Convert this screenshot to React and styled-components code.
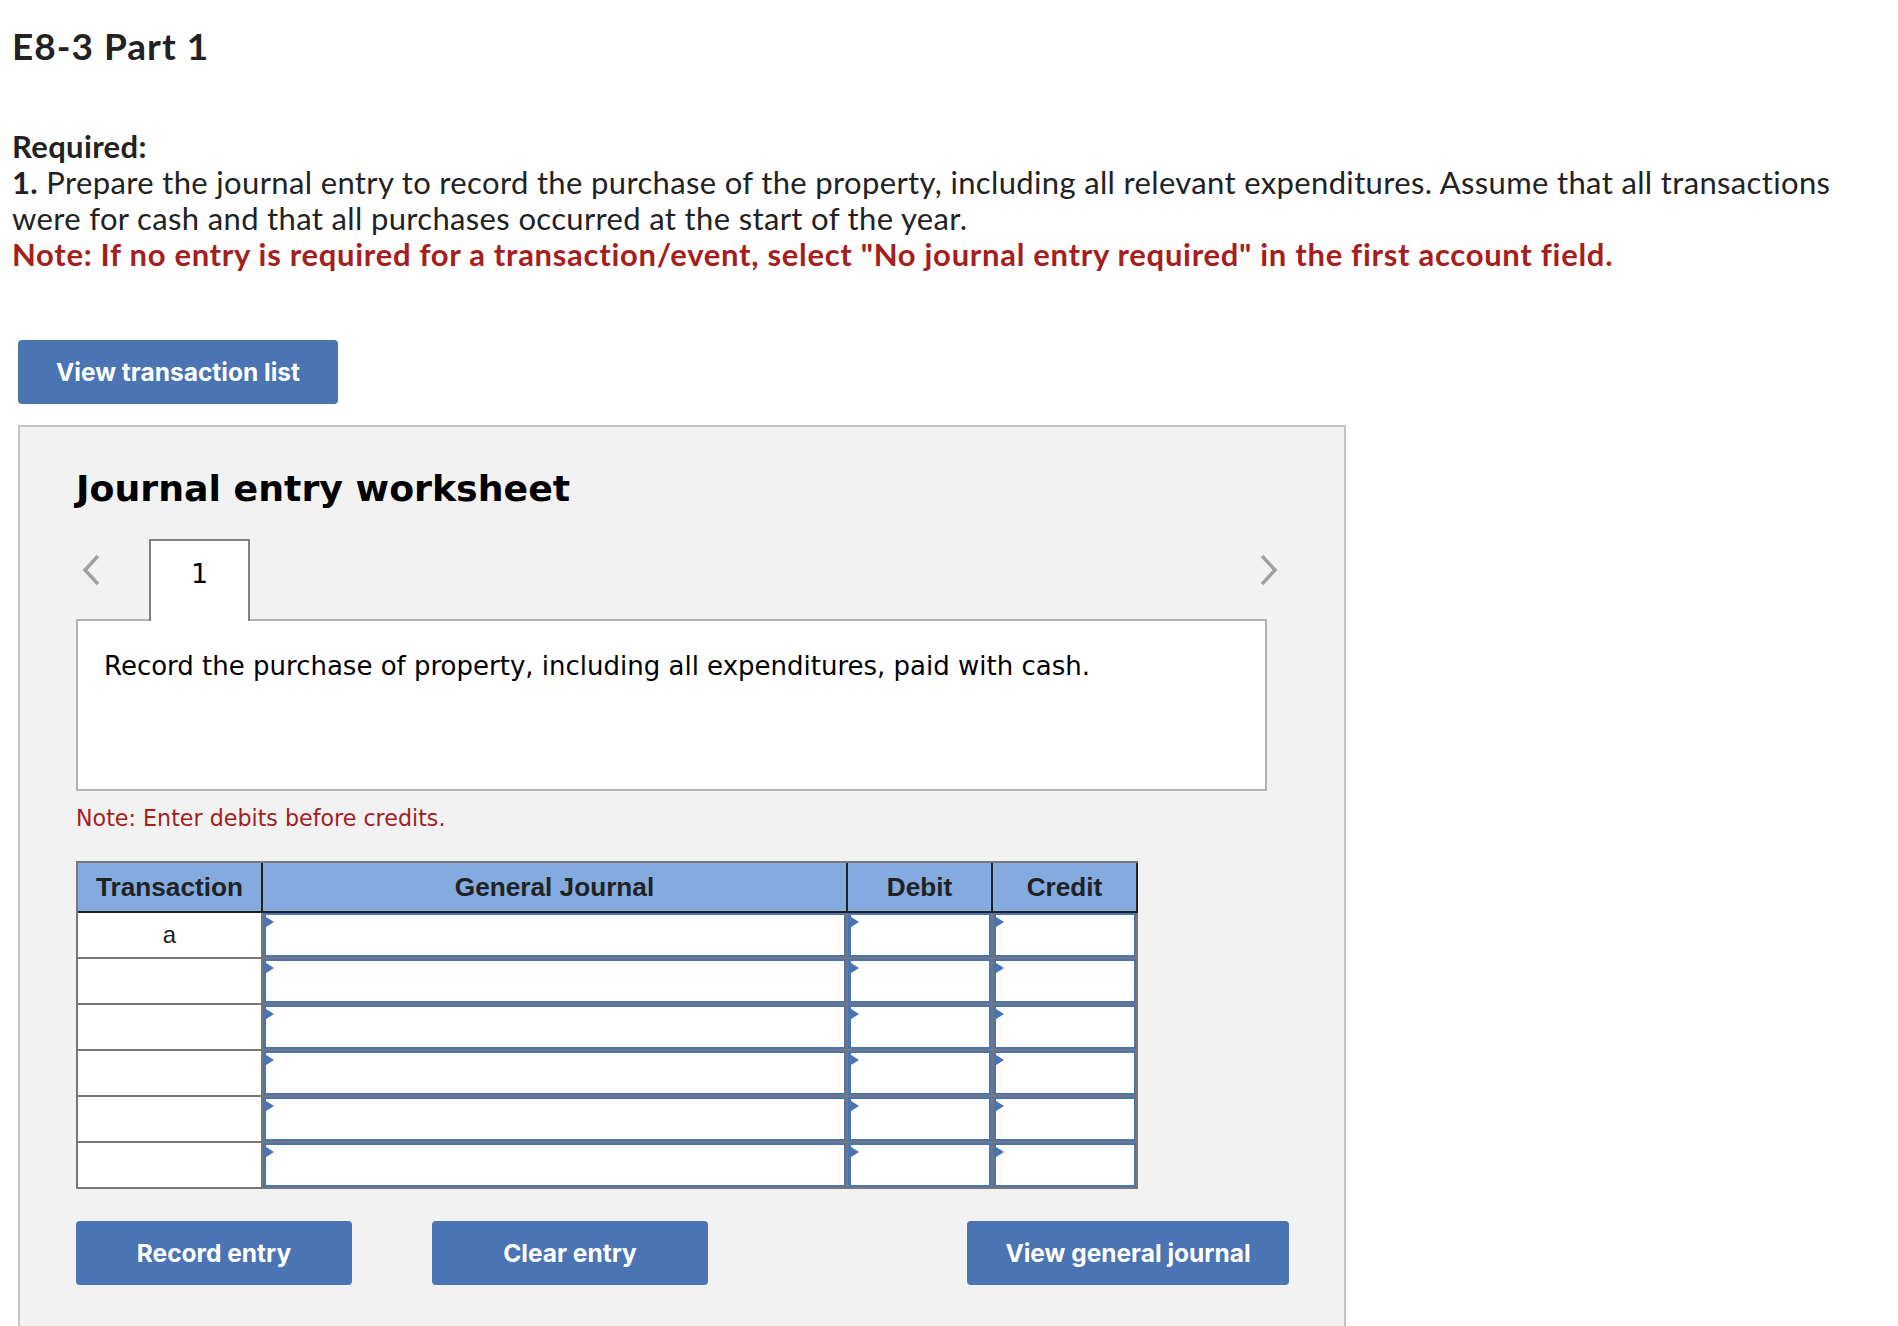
import React from "react";
import styled, { createGlobalStyle } from "styled-components";

const GlobalStyle = createGlobalStyle`
  html, body {
    margin: 0;
    padding: 0;
    background: #fff;
  }
`;

const Page = styled.div`
  height: 1326px;
  overflow: hidden;
  display: flex;
  flex-direction: column;
  font-family: "Lato", "Liberation Sans", sans-serif;
  font-variant-ligatures: none;
  color: #222;
`;

const Title = styled.h1`
  margin: 23px 0 0 12px;
  font-size: 37px;
  line-height: 46px;
  font-weight: 700;
  letter-spacing: 1px;
`;

const Question = styled.div`
  margin: 59px 0 0 12px;
  width: 1850px;
  font-size: 31px;
  line-height: 36px;
  letter-spacing: 0.35px;
`;

const Strong = styled.div`
  font-weight: 700;
`;

const Warning = styled.div`
  font-weight: 700;
  color: #a5201c;
  letter-spacing: 0.7px;
`;

const BlueButton = styled.button`
  height: 64px;
  width: ${(p) => p.$width}px;
  padding: 0;
  border: none;
  border-radius: 4px;
  background: #4a74b3;
  color: #fff;
  font-family: "Inter", sans-serif;
  font-size: 24.5px;
  font-weight: 700;
`;

const TopAction = styled.div`
  margin: 68px 0 0 18px;
`;

const Panel = styled.section`
  flex: 1;
  box-sizing: border-box;
  width: 1328px;
  margin: 21px 0 0 18px;
  padding: 0 55px 0 56px;
  border: 2px solid #c4c4c4;
  border-bottom: none;
  background: #f2f2f2;
`;

const PanelTitle = styled.h2`
  margin: 39px 0 0;
  font-family: "DejaVu Sans", sans-serif;
  font-size: 36.3px;
  line-height: 46px;
  font-weight: 700;
  color: #000;
`;

const TabRow = styled.div`
  display: flex;
  align-items: flex-start;
  margin-top: 27px;
`;

const Arrow = styled.svg`
  flex-shrink: 0;
  width: 20px;
  height: 32px;
  margin: 15px 0 0 ${(p) => p.$left}px;
  fill: none;
  stroke: #a0a0a0;
  stroke-width: 3.5;
`;

const Tab = styled.div`
  position: relative;
  z-index: 1;
  flex-shrink: 0;
  box-sizing: border-box;
  width: 101px;
  height: 82px;
  margin: 0 0 -2px 48px;
  padding-top: 15px;
  border: 2px solid #808080;
  border-bottom: none;
  background: #fff;
  font-family: "DejaVu Sans", sans-serif;
  font-size: 27px;
  line-height: 36px;
  text-align: center;
  color: #000;
`;

const PromptBox = styled.div`
  box-sizing: border-box;
  width: 1191px;
  height: 172px;
  padding: 27px 26px;
  border: 2px solid #b3b3b3;
  background: #fff;
  font-family: "DejaVu Sans", sans-serif;
  font-size: 26px;
  line-height: 36px;
  color: #000;
`;

const PanelNote = styled.p`
  margin: 9px 0 0;
  font-family: "DejaVu Sans", sans-serif;
  font-size: 22.2px;
  line-height: 36px;
  color: #a5201c;
`;

const Grid = styled.div`
  display: grid;
  grid-template-columns: 185px 585px 145px 143px;
  box-sizing: border-box;
  width: 1062px;
  margin-top: 25px;
  border: 2px solid #777;
  background: #777;
  font-family: "Liberation Sans", sans-serif;
  font-size: 26.2px;
  color: #222;
`;

const HeadCell = styled.div`
  box-sizing: border-box;
  height: 50px;
  margin-right: ${(p) => (p.$end ? "-2px" : "0")};
  display: flex;
  align-items: center;
  justify-content: center;
  border-right: 2px solid #222;
  border-bottom: 2px solid #222;
  background: #83abe0;
  font-weight: 700;
`;

const LabelCell = styled.div`
  height: 44px;
  margin: 0 2px ${(p) => (p.$last ? 0 : 2)}px 0;
  display: flex;
  align-items: center;
  justify-content: center;
  background: #fff;
  font-size: 24px;
`;

const InputCell = styled.div`
  position: relative;
  box-sizing: border-box;
  height: 44px;
  margin: 0 ${(p) => (p.$end ? 0 : 2)}px ${(p) => (p.$last ? 0 : 2)}px 0;
  border: 2px solid #4a74b3;
  border-left-width: 3px;
  background: #fff;

  &::before {
    content: "";
    position: absolute;
    top: 0;
    left: -3px;
    border-top: 7px solid transparent;
    border-bottom: 7px solid transparent;
    border-left: 11px solid #4a74b3;
  }
`;

const ActionRow = styled.div`
  display: flex;
  gap: 80px;
  margin-top: 32px;
`;

const RightButton = styled(BlueButton)`
  margin-left: auto;
`;

const rows = ["a", "", "", "", "", ""];

const App = () => {
  return (
    <Page>
      <GlobalStyle />
      <Title>E8-3 Part 1</Title>
      <Question>
        <Strong>Required:</Strong>
        <div>
          <b>1.</b> Prepare the journal entry to record the purchase of the property, including all
          relevant expenditures. Assume that all transactions were for cash and that all purchases
          occurred at the start of the year.
        </div>
        <Warning>
          Note: If no entry is required for a transaction/event, select "No journal entry required"
          in the first account field.
        </Warning>
      </Question>
      <TopAction>
        <BlueButton $width={320}>View transaction list</BlueButton>
      </TopAction>
      <Panel>
        <PanelTitle>Journal entry worksheet</PanelTitle>
        <TabRow>
          <Arrow $left={5} viewBox="0 0 20 32">
            <path d="M17 2 L4 16 L17 30" />
          </Arrow>
          <Tab>1</Tab>
          <Arrow $left={1009} viewBox="0 0 20 32">
            <path d="M3 2 L16 16 L3 30" />
          </Arrow>
        </TabRow>
        <PromptBox>
          Record the purchase of property, including all expenditures, paid with cash.
        </PromptBox>
        <PanelNote>Note: Enter debits before credits.</PanelNote>
        <Grid>
          <HeadCell>Transaction</HeadCell>
          <HeadCell>General Journal</HeadCell>
          <HeadCell>Debit</HeadCell>
          <HeadCell $end>Credit</HeadCell>
          {rows.map((label, i) => {
            const last = i === rows.length - 1;
            return (
              <React.Fragment key={i}>
                <LabelCell $last={last}>{label}</LabelCell>
                <InputCell $last={last} />
                <InputCell $last={last} />
                <InputCell $last={last} $end />
              </React.Fragment>
            );
          })}
        </Grid>
        <ActionRow>
          <BlueButton $width={276}>Record entry</BlueButton>
          <BlueButton $width={276}>Clear entry</BlueButton>
          <RightButton $width={322}>View general journal</RightButton>
        </ActionRow>
      </Panel>
    </Page>
  );
};

export default App;
